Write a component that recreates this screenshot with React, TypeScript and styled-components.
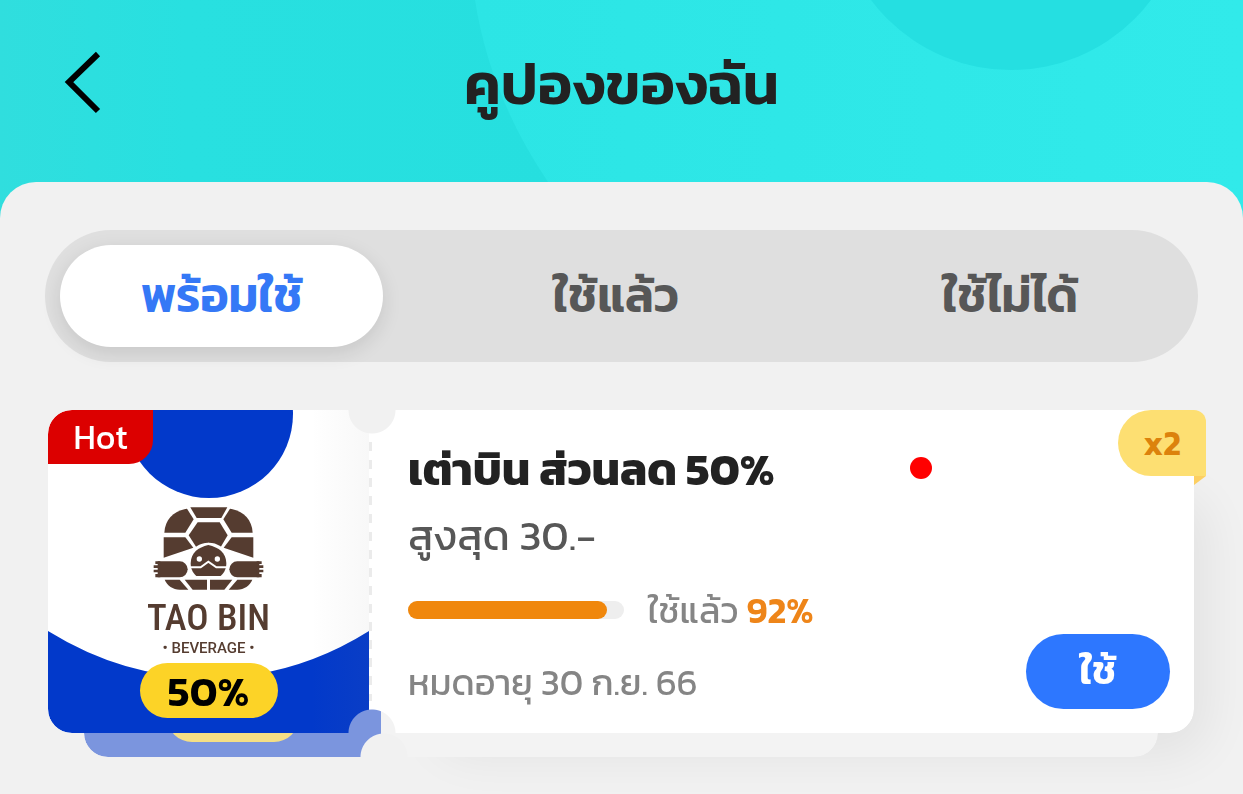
import React from "react";
import styled, { createGlobalStyle } from "styled-components";

const GlobalStyle = createGlobalStyle`
  *, *::before, *::after { box-sizing: border-box; }
  body {
    margin: 0;
    background: #f1f1f1;
    font-family: Kanit, "Noto Sans Thai", "Noto Sans", "Open Sans", sans-serif;
    color: #222;
  }
  button { font-family: inherit; border: 0; padding: 0; cursor: pointer; }
  h1, h2, p { margin: 0; }
`;

const Page = styled.div`
  position: relative;
  min-height: 100vh;
  overflow: hidden;
  background: #f1f1f1;
`;

const Backdrop = styled.svg`
  position: absolute;
  top: 0;
  left: 0;
  width: 100%;
  height: 224px;
`;

const Header = styled.header`
  position: relative;
  display: grid;
  grid-template-columns: 120px 1fr 120px;
  align-items: center;
  height: 182px;
  padding-bottom: 14px;
`;

const BackButton = styled.button`
  display: flex;
  justify-content: flex-end;
  width: 104px;
  background: none;
`;

const Title = styled.h1`
  text-align: center;
  font-size: 58px;
  line-height: 80px;
  font-weight: 600;
`;

const Sheet = styled.main`
  position: relative;
  padding: 48px 45px 60px;
  border-radius: 36px 36px 0 0;
  background: #f1f1f1;
`;

const Tabs = styled.div`
  display: grid;
  grid-template-columns: repeat(3, 1fr);
  gap: 71px;
  height: 132px;
  padding: 15px 26px 15px 15px;
  border-radius: 66px;
  background: #dfdfdf;
`;

const Tab = styled.button<{ $active?: boolean }>`
  padding-bottom: 2px;
  border-radius: 51px;
  background: ${(p) => (p.$active ? "#fff" : "transparent")};
  box-shadow: ${(p) => (p.$active ? "0 6px 20px rgba(0, 0, 0, 0.11)" : "none")};
  color: ${(p) => (p.$active ? "#3578f6" : "#575757")};
  font-size: 48px;
  line-height: 60px;
  font-weight: 600;
`;

const Stack = styled.article`
  position: relative;
  margin: 48px 4px 0 3px;

  &::before {
    content: "";
    position: absolute;
    inset: 80px 20px 12px 380px;
    border-radius: 24px;
    box-shadow: 20px 20px 48px 16px rgba(0, 0, 0, 0.06);
  }
`;

const notched = (x: number) => `
  mask-image:
    radial-gradient(circle at ${x}px 0, transparent 23px, #000 24px),
    radial-gradient(circle at ${x}px 100%, transparent 23px, #000 24px);
  mask-composite: intersect;
`;

const BackCard = styled.div`
  position: absolute;
  top: 50%;
  right: 36px;
  bottom: -24px;
  left: 36px;
  display: flex;
  align-items: flex-end;
  border-radius: 24px;
  overflow: hidden;
  background: #f3f3f3;
  ${notched(300)}
`;

const BackArt = styled.div`
  display: flex;
  align-items: flex-end;
  justify-content: center;
  width: 297px;
  height: 60px;
  padding-bottom: 15px;
  background: #7b95de;
`;

const BackPill = styled.div`
  width: 132px;
  height: 50px;
  border-radius: 25px;
  background: #f5df85;
`;

const Card = styled.div`
  position: relative;
  display: flex;
  height: 323px;
  border-radius: 24px;
  overflow: hidden;
  background: #fff;
  ${notched(324)}
`;

const Art = styled.div`
  position: relative;
  display: flex;
  flex-direction: column;
  align-items: center;
  flex: none;
  width: 321px;
  padding-top: 95px;
`;

const ArtBackground = styled.svg`
  position: absolute;
  inset: 0;
`;

const HotTag = styled.span`
  position: absolute;
  top: 0;
  left: 0;
  width: 105px;
  height: 54px;
  border-radius: 0 0 24px 0;
  background: #dc0000;
  color: #fff;
  text-align: center;
  font-size: 34px;
  line-height: 54px;
  font-weight: 400;
`;

const Turtle = styled.svg`
  position: relative;
`;

const Brand = styled.p`
  position: relative;
  margin-top: 4px;
  color: #553c30;
  font-family: "Roboto Condensed", "Arial Narrow", Roboto, sans-serif;
  font-size: 37px;
  line-height: 44px;
  font-weight: 500;
`;

const BrandSub = styled.p`
  position: relative;
  color: #553c30;
  font-family: Roboto, sans-serif;
  font-size: 15px;
  line-height: 16px;
  font-weight: 500;
`;

const DiscountPill = styled.strong`
  position: relative;
  width: 138px;
  height: 55px;
  margin-top: 7px;
  border-radius: 28px;
  background: #fcd327;
  color: #000;
  text-align: center;
  font-size: 42px;
  line-height: 58px;
  font-weight: 600;
`;

const Info = styled.div`
  display: flex;
  justify-content: space-between;
  align-items: flex-end;
  flex: 1;
  margin: 32px 0;
  padding: 0 24px 0 39px;
  background: repeating-linear-gradient(#ebebeb 0 9px, transparent 9px 18px) 0 0 / 3px 100% no-repeat;
`;

const Details = styled.div`
  align-self: flex-start;
`;

const CouponTitle = styled.h2`
  font-size: 45px;
  line-height: 54px;
  font-weight: 700;
`;

const Terms = styled.p`
  margin-top: 10px;
  color: #575757;
  font-size: 42px;
  line-height: 60px;
`;

const Usage = styled.div`
  display: flex;
  align-items: center;
  gap: 24px;
  margin-top: 20px;
  color: #858585;
  font-size: 36px;
  line-height: 48px;
`;

const Track = styled.div`
  width: 216px;
  height: 18px;
  border-radius: 9px;
  background: #eee;
`;

const Fill = styled.div`
  height: 100%;
  border-radius: 9px;
  background: #f0870c;
`;

const Percent = styled.strong`
  color: #ee8519;
  font-weight: 600;
`;

const Expiry = styled.p`
  margin-top: 24px;
  color: #858585;
  font-size: 36px;
  line-height: 48px;
`;

const UseButton = styled.button`
  flex: none;
  width: 144px;
  height: 75px;
  margin-bottom: -8px;
  padding-bottom: 4px;
  border-radius: 38px;
  background: #2d77ff;
  color: #fff;
  font-size: 40px;
  line-height: 48px;
  font-weight: 600;
`;

const Count = styled.span`
  position: absolute;
  top: 0;
  right: -12px;
  width: 88px;
  height: 66px;
  border-radius: 33px 12px 0 33px;
  background: #fddf72;
  color: #dc820c;
  text-align: center;
  font-size: 34px;
  line-height: 66px;
  font-weight: 600;

  &::after {
    content: "";
    position: absolute;
    top: 66px;
    right: 0;
    width: 12px;
    height: 9px;
    background: #fccf62;
    clip-path: polygon(0 0, 100% 0, 0 100%);
  }
`;

const Marker = styled.span`
  position: absolute;
  top: 47px;
  right: 262px;
  width: 22px;
  height: 22px;
  border-radius: 50%;
  background: #f00;
`;

const shellSide = (
  <>
    <path d="M167 42C130 50 106 75 104 113H167L192 73L172 41Z" />
    <path d="M102 127H167L191 158L102 188Z" />
    <path d="M105 254H150L176 284H150C130 284 112 271 105 254Z" />
    <path d="M165 254H232V284H189Z" />
    <path d="M84 199H150A24 24 0 0 1 150 247H84Z" />
    <path d="M77 199H92V207H77ZM72 211H92V219H72ZM72 224H92V232H72ZM77 237H92V247H77Z" />
  </>
);

const TurtleLogo = () => (
  <Turtle width="117" height="87" viewBox="61 30 351 261" fill="#553c30" aria-hidden="true">
    <path d="M182 37H293L275 69H201Z" />
    <path d="M204 82H270L294 121L271 160H202L177 121Z" />
    {shellSide}
    <g transform="matrix(-1 0 0 1 473 0)">{shellSide}</g>
    <path d="M102 191L180 164L236 143L293 164L371 191L300 197H173Z" fill="#fff" />
    <path d="M198 250A60 60 0 0 1 236 143A60 60 0 0 1 275 250Z" fill="#fff" />
    <path d="M200 243C187 232 183 218 183 204C184 174 205 157 236 150C268 157 289 174 290 204C290 218 286 232 273 243Z" />
    <path d="M182 217H213L236 200L260 217H291" fill="none" stroke="#fff" strokeWidth="6" />
    <circle cx="209" cy="192" r="8" fill="#fff" />
    <circle cx="263" cy="192" r="8" fill="#fff" />
  </Turtle>
);

const tabs = ["พร้อมใช้", "ใช้แล้ว", "ใช้ไม่ได้"];
const used = 92;

export default function App() {
  return (
    <Page>
      <GlobalStyle />
      <Backdrop viewBox="0 0 1243 224" preserveAspectRatio="none" aria-hidden="true">
        <defs>
          <linearGradient id="sea" x1="0" x2="1">
            <stop offset="0" stopColor="#30dede" />
            <stop offset="0.15" stopColor="#28e0e0" />
            <stop offset="0.45" stopColor="#26dfdf" />
          </linearGradient>
          <linearGradient id="foam" x1="0" x2="1">
            <stop offset="0" stopColor="#2ce5e5" />
            <stop offset="1" stopColor="#31eaea" />
          </linearGradient>
        </defs>
        <rect width="1243" height="224" fill="url(#sea)" />
        <path d="M475 0Q490 96 548 182L578 224H1243V0Z" fill="url(#foam)" />
        <circle cx="1011" cy="-105" r="175" fill="#25dfe1" />
      </Backdrop>
      <Header>
        <BackButton aria-label="ย้อนกลับ">
          <svg width="42" height="66" viewBox="0 0 42 66" fill="none" stroke="#000" strokeWidth="6">
            <path d="M36 3L7 31L36 60" />
          </svg>
        </BackButton>
        <Title>คูปองของฉัน</Title>
      </Header>
      <Sheet>
        <Tabs role="tablist">
          {tabs.map((label, i) => (
            <Tab key={label} role="tab" aria-selected={i === 0} $active={i === 0}>
              {label}
            </Tab>
          ))}
        </Tabs>
        <Stack>
          <BackCard>
            <BackArt>
              <BackPill />
            </BackArt>
          </BackCard>
          <Card>
            <Art>
              <ArtBackground width="321" height="323" viewBox="0 0 321 323" aria-hidden="true">
                <defs>
                  <linearGradient id="fold" x1="0" x2="1">
                    <stop offset="0.82" stopColor="#888" stopOpacity="0" />
                    <stop offset="1" stopColor="#888" stopOpacity="0.06" />
                  </linearGradient>
                </defs>
                <circle cx="161" cy="4" r="84" fill="#0239ca" />
                <path d="M0 221Q76 268 161 268T321 221V323H0Z" fill="#0239ca" />
                <rect width="321" height="323" fill="url(#fold)" />
              </ArtBackground>
              <HotTag>Hot</HotTag>
              <TurtleLogo />
              <Brand>TAO BIN</Brand>
              <BrandSub>• BEVERAGE •</BrandSub>
              <DiscountPill>50%</DiscountPill>
            </Art>
            <Info>
              <Details>
                <CouponTitle>เต่าบิน ส่วนลด 50%</CouponTitle>
                <Terms>สูงสุด 30.-</Terms>
                <Usage>
                  <Track role="progressbar" aria-label="ใช้แล้ว" aria-valuenow={used}>
                    <Fill style={{ width: `${used}%` }} />
                  </Track>
                  <span>
                    ใช้แล้ว <Percent>{used}%</Percent>
                  </span>
                </Usage>
                <Expiry>หมดอายุ 30 ก.ย. 66</Expiry>
              </Details>
              <UseButton>ใช้</UseButton>
            </Info>
          </Card>
          <Count>x2</Count>
          <Marker />
        </Stack>
      </Sheet>
    </Page>
  );
}
